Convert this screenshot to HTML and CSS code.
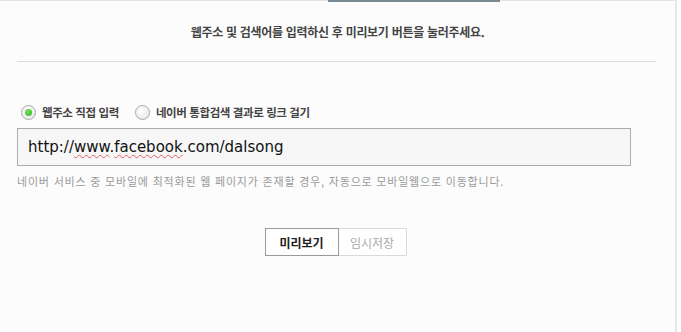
FILE: index.html
```html
<!DOCTYPE html>
<html lang="ko">
<head>
    <meta charset="UTF-8">
    <title>링크 설정</title>
    <link rel="stylesheet" href="styles.css">
</head>
<body>

<div class="panel">
    <!-- top tab line -->
    <div class="tab-line">
        <span class="tab-line-off left"></span>
        <span class="tab-line-on"></span>
        <span class="tab-line-off"></span>
    </div>

    <div class="guide">웹주소 및 검색어를 입력하신 후 미리보기 버튼을 눌러주세요.</div>
    <hr class="divider">

    <div class="options">
        <label class="option">
            <span class="radio checked"></span>
            웹주소 직접 입력
        </label>
        <label class="option">
            <span class="radio"></span>
            네이버 통합검색 결과로 링크 걸기
        </label>
    </div>

    <div class="url-box">
        http://<span class="typo">www</span>.<span class="typo">facebook</span>.com/dalsong
    </div>

    <p class="note">네이버 서비스 중 모바일에 최적화된 웹 페이지가 존재할 경우, 자동으로 모바일웹으로 이동합니다.</p>

    <div class="buttons">
        <button class="btn btn-preview">미리보기</button>
        <button class="btn btn-save">임시저장</button>
    </div>
</div>

</body>
</html>
```

FILE: styles.css
```css
html, body {
    margin: 0;
    background-color: #ffffff;
}

body {
    font-family: "Noto Sans CJK KR", "Noto Sans", sans-serif;
    color: #333;
}

.panel {
    width: 675px;
    height: 332px;
    background-color: #fcfcfc;
    border-right: 2px solid #e6e6e6;
}

/* top tab line */
.tab-line {
    display: flex;
    height: 2px;
}

.tab-line-off {
    flex: 1;
    border-top: 1px solid #e4e4e4;
}

.tab-line-off.left {
    flex: none;
    width: 328px;
}

.tab-line-on {
    width: 172px;
    background-color: #7a8a94;
}

.guide {
    text-align: center;
    font-size: 12px;
    font-weight: bold;
    color: #444;
    padding-top: 21px;
    height: 38px;
    line-height: 18px;
    box-sizing: border-box;
    letter-spacing: -0.3px;
}

.divider {
    margin: 21px 19px 0 17px;
    border: 0;
    border-top: 1px solid #dcdcdc;
}

.options {
    display: flex;
    gap: 16px;
    margin: 42px 0 0 21px;
    height: 16px;
    align-items: center;
}

.option {
    display: flex;
    align-items: center;
    gap: 6px;
    font-size: 11.5px;
    font-weight: bold;
    color: #444;
    letter-spacing: -0.4px;
}

.radio {
    width: 13px;
    height: 13px;
    border: 1px solid #a8a8a8;
    border-radius: 50%;
    background: radial-gradient(circle at 40% 35%, #ffffff, #e4e4e4);
    display: flex;
    align-items: center;
    justify-content: center;
}

.radio.checked::after {
    content: "";
    width: 7px;
    height: 7px;
    border-radius: 50%;
    background: radial-gradient(circle at 40% 35%, #6fe05a, #2fb51c);
}

.url-box {
    margin: 8px 0 0 17px;
    width: 602px;
    height: 36px;
    border: 1px solid #ababab;
    background-color: #f7f7f7;
    font-family: "DejaVu Sans", sans-serif;
    font-size: 15px;
    line-height: 36px;
    padding-left: 10px;
    color: #111;
}

.typo {
    text-decoration: underline wavy #e06060;
    text-decoration-thickness: 1px;
    text-underline-offset: 2px;
}

.note {
    margin: 7px 0 0 17px;
    font-size: 11px;
    color: #9a9a9a;
    letter-spacing: 0.8px;
}

.buttons {
    display: flex;
    justify-content: center;
    margin-top: 39px;
    padding-right: 4px;
}

.btn {
    height: 28px;
    font-family: "Noto Sans CJK KR", sans-serif;
    font-size: 12px;
    background-color: #fff;
    cursor: pointer;
}

.btn-preview {
    width: 74px;
    border: 1px solid #9a9a9a;
    color: #222;
    font-weight: bold;
}

.btn-save {
    width: 68px;
    border: 1px solid #dadada;
    border-left: 0;
    color: #aaa;
}
```
